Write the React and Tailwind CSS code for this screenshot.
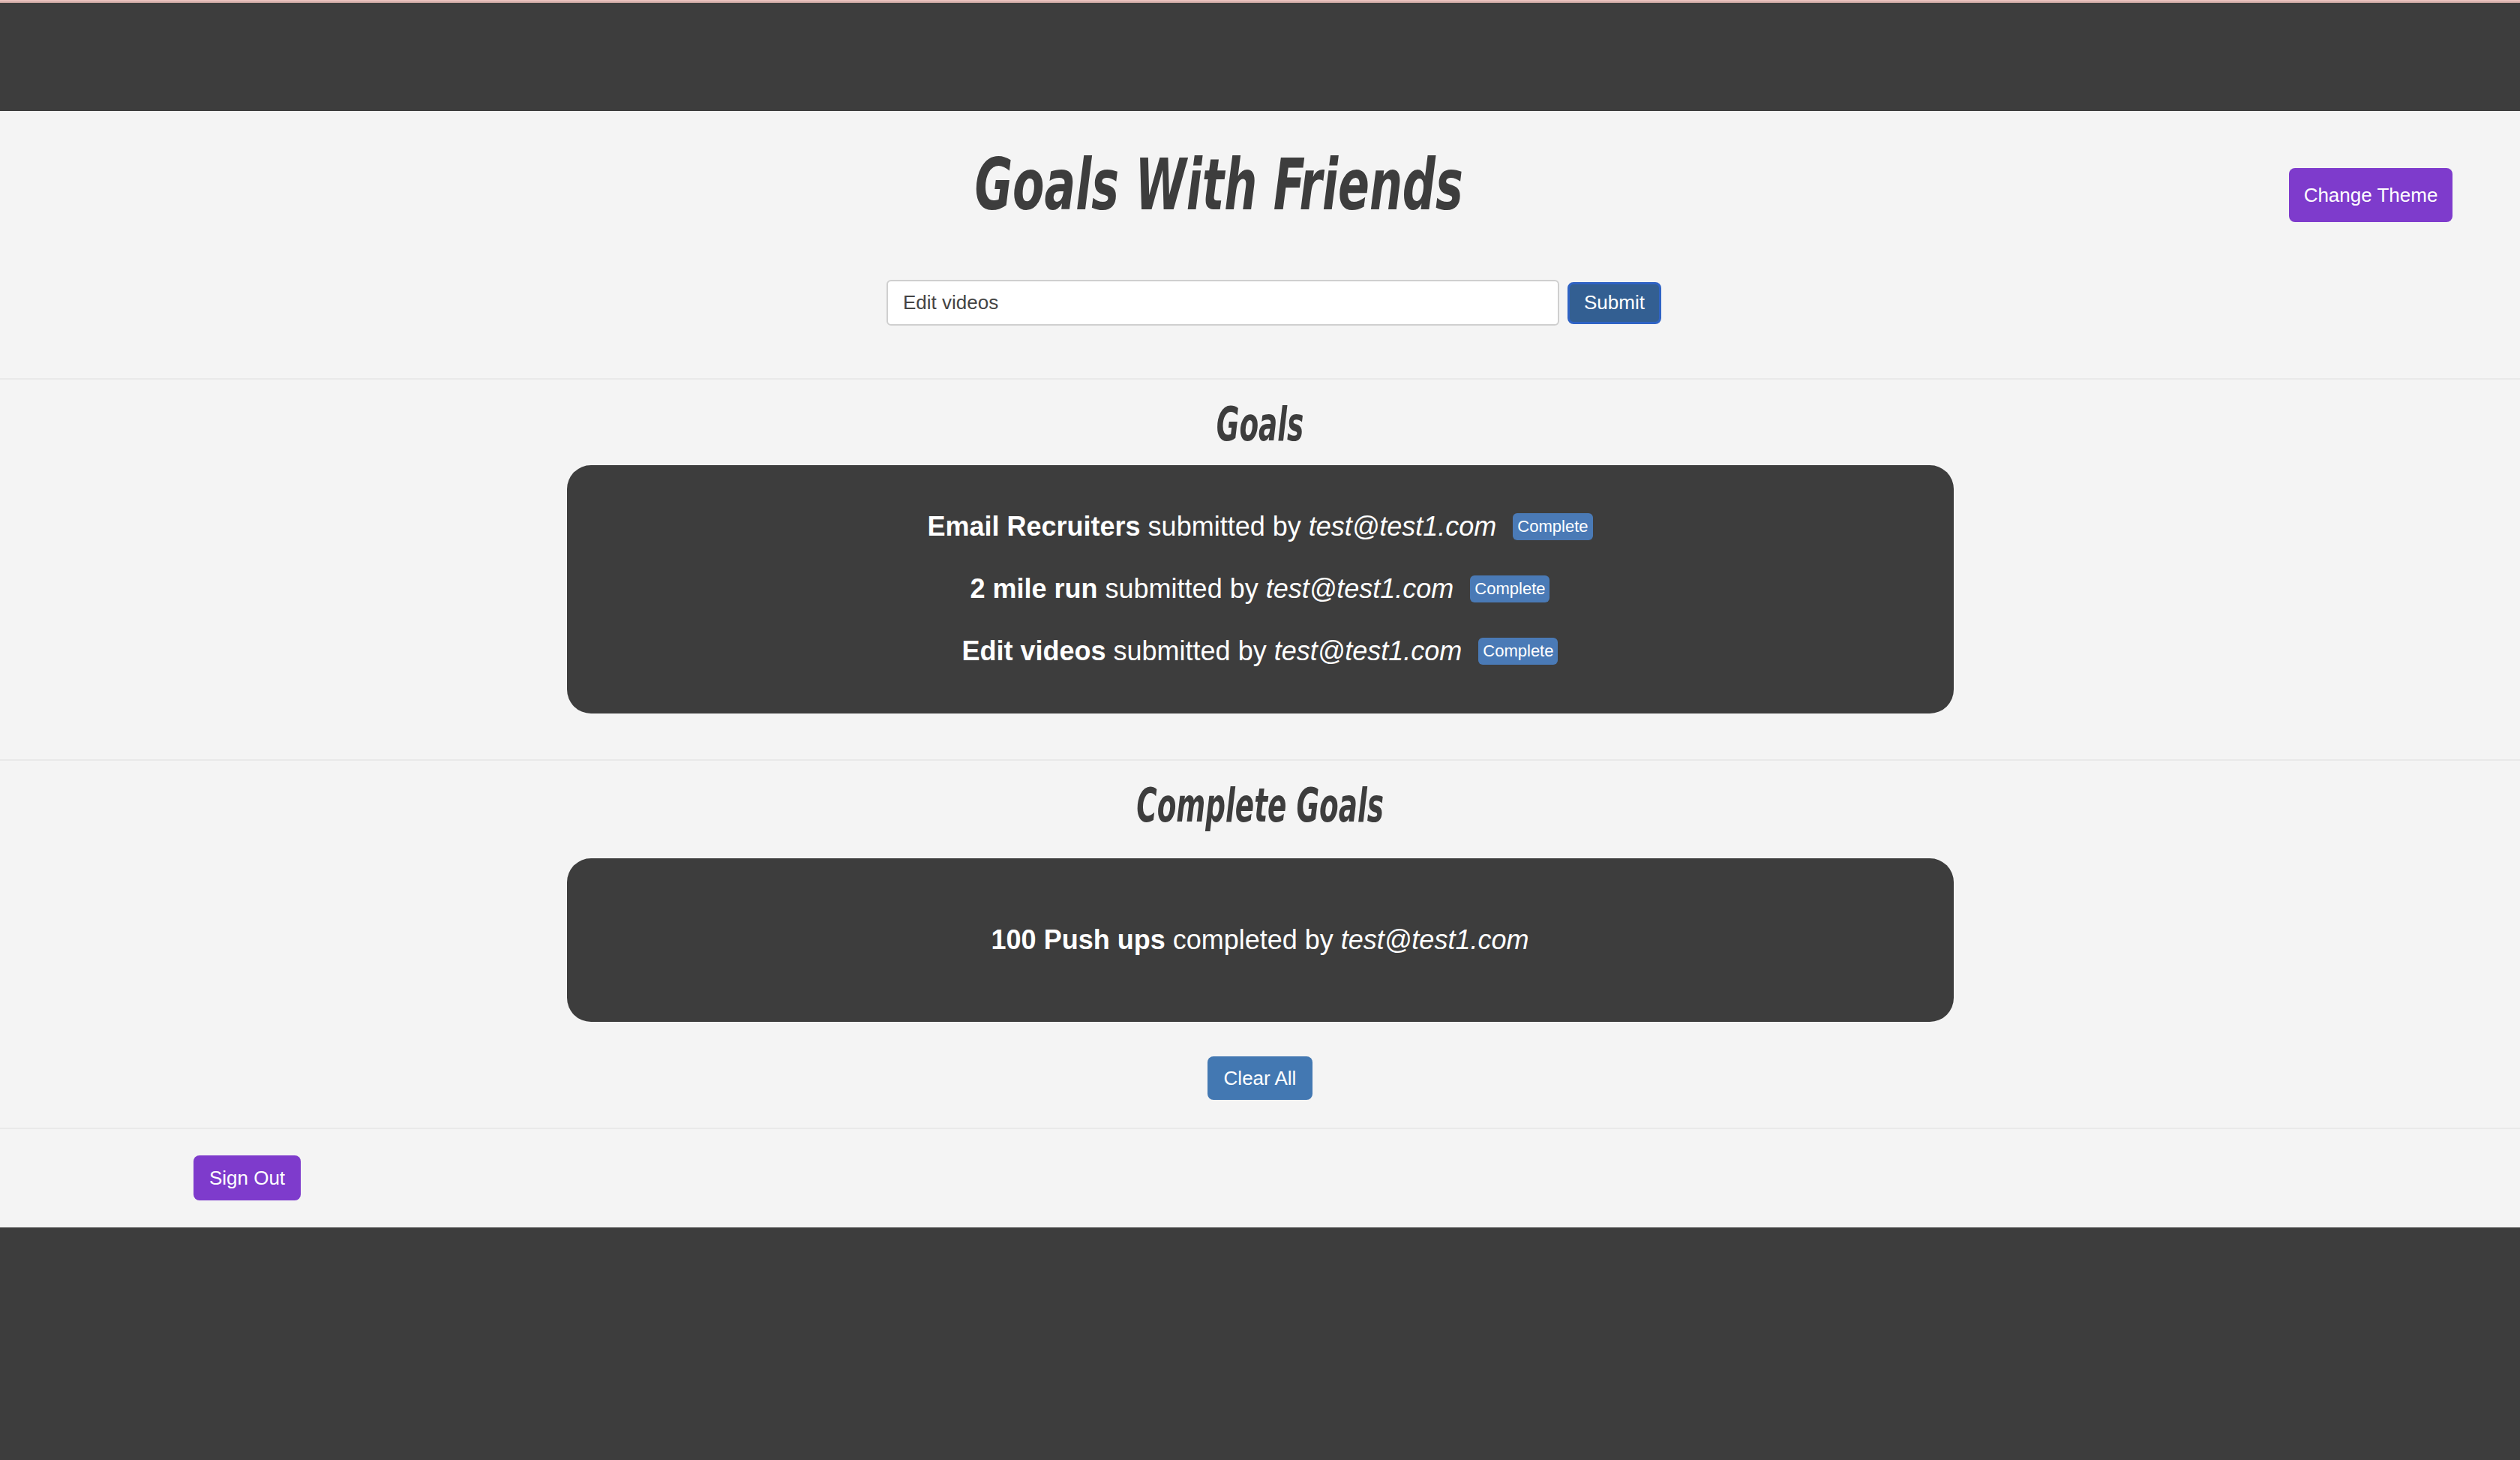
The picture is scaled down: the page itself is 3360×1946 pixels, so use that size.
import { useState } from 'react'

const goals = [
  { title: 'Email Recruiters', user: 'test@test1.com' },
  { title: '2 mile run', user: 'test@test1.com' },
  { title: 'Edit videos', user: 'test@test1.com' },
]

const completed = [{ title: '100 Push ups', user: 'test@test1.com' }]

// no condensed face available offline, so squeeze the bold oblique
const display = { fontFamily: '"DejaVu Sans Condensed", "DejaVu Sans", sans-serif' }

function App() {
  const [goal, setGoal] = useState('Edit videos')

  return (
    <div className="min-h-screen bg-[#3d3d3d] font-['Liberation_Sans',Arial,sans-serif]">
      <div className="h-[2px] bg-[#ebc3bf]" />
      <div className="h-[2px] bg-[#c9a5a1]" />
      <div className="h-[144px]" />

      <main className="bg-[#f4f4f4]">
        {/* header */}
        <section className="h-[358px] border-b-2 border-[#e9e9e9]">
          <div className="flex items-start pt-[52px]">
            <div className="w-[198px]" />
            <h1
              style={display}
              className="flex-1 text-center text-[94px] leading-none font-bold italic text-[#3d3d3d]"
            >
              <span className="inline-block scale-x-[0.73]">Goals With Friends</span>
            </h1>
            <button className="mt-[24px] mr-[90px] w-[218px] h-[72px] rounded-[8px] bg-[#7e3bcc] text-white text-[26px]">
              Change Theme
            </button>
          </div>
          <form
            className="flex justify-center items-center gap-[11px] pl-[37px] mt-[77px]"
            onSubmit={(e) => e.preventDefault()}
          >
            <input
              value={goal}
              onChange={(e) => setGoal(e.target.value)}
              className="w-[897px] h-[61px] rounded-[6px] border-2 border-[#cfcfcf] bg-white pl-[20px] text-[26px] text-[#444]"
            />
            <button className="w-[125px] h-[56px] rounded-[8px] border-[3px] border-[#2f63c4] bg-[#335f92] text-white text-[26px]">
              Submit
            </button>
          </form>
        </section>

        {/* goals */}
        <section className="border-b-2 border-[#e9e9e9] pb-[61px]">
          <h2
            style={display}
            className="pt-[26px] text-center text-[62px] leading-[68px] font-bold italic text-[#3d3d3d]"
          >
            <span className="inline-block scale-x-[0.67]">Goals</span>
          </h2>
          <div className="mx-auto mt-[20px] w-[1849px] rounded-[32px] bg-[#3d3d3d] pt-[40px] pb-[42px]">
            {goals.map((g) => (
              <div key={g.title} className="flex h-[83px] items-center justify-center text-[36px] text-white">
                <span>
                  <b>{g.title}</b> submitted by <i>{g.user}</i>
                </span>
                <span className="ml-[22px] rounded-[6px] bg-[#4a7ab6] px-[6px] py-[3px] text-[22px] leading-[30px]">
                  Complete
                </span>
              </div>
            ))}
          </div>
        </section>

        {/* complete goals */}
        <section className="border-b-2 border-[#e9e9e9] pb-[37px]">
          <h2
            style={display}
            className="pt-[26px] text-center text-[62px] leading-[68px] font-bold italic text-[#3d3d3d]"
          >
            <span className="inline-block scale-x-[0.67]">Complete Goals</span>
          </h2>
          <div className="mx-auto mt-[36px] flex h-[218px] w-[1849px] flex-col items-center justify-center rounded-[32px] bg-[#3d3d3d]">
            {completed.map((g) => (
              <div key={g.title} className="text-[36px] text-white">
                <b>{g.title}</b> completed by <i>{g.user}</i>
              </div>
            ))}
          </div>
          <div className="mt-[46px] flex justify-center">
            <button className="w-[140px] h-[58px] rounded-[8px] bg-[#4378b2] text-white text-[26px]">
              Clear All
            </button>
          </div>
        </section>

        {/* footer */}
        <section className="h-[131px] pt-[35px] pl-[258px]">
          <button className="w-[143px] h-[60px] rounded-[8px] bg-[#7e3bcc] text-white text-[26px]">
            Sign Out
          </button>
        </section>
      </main>
    </div>
  )
}

export default App
